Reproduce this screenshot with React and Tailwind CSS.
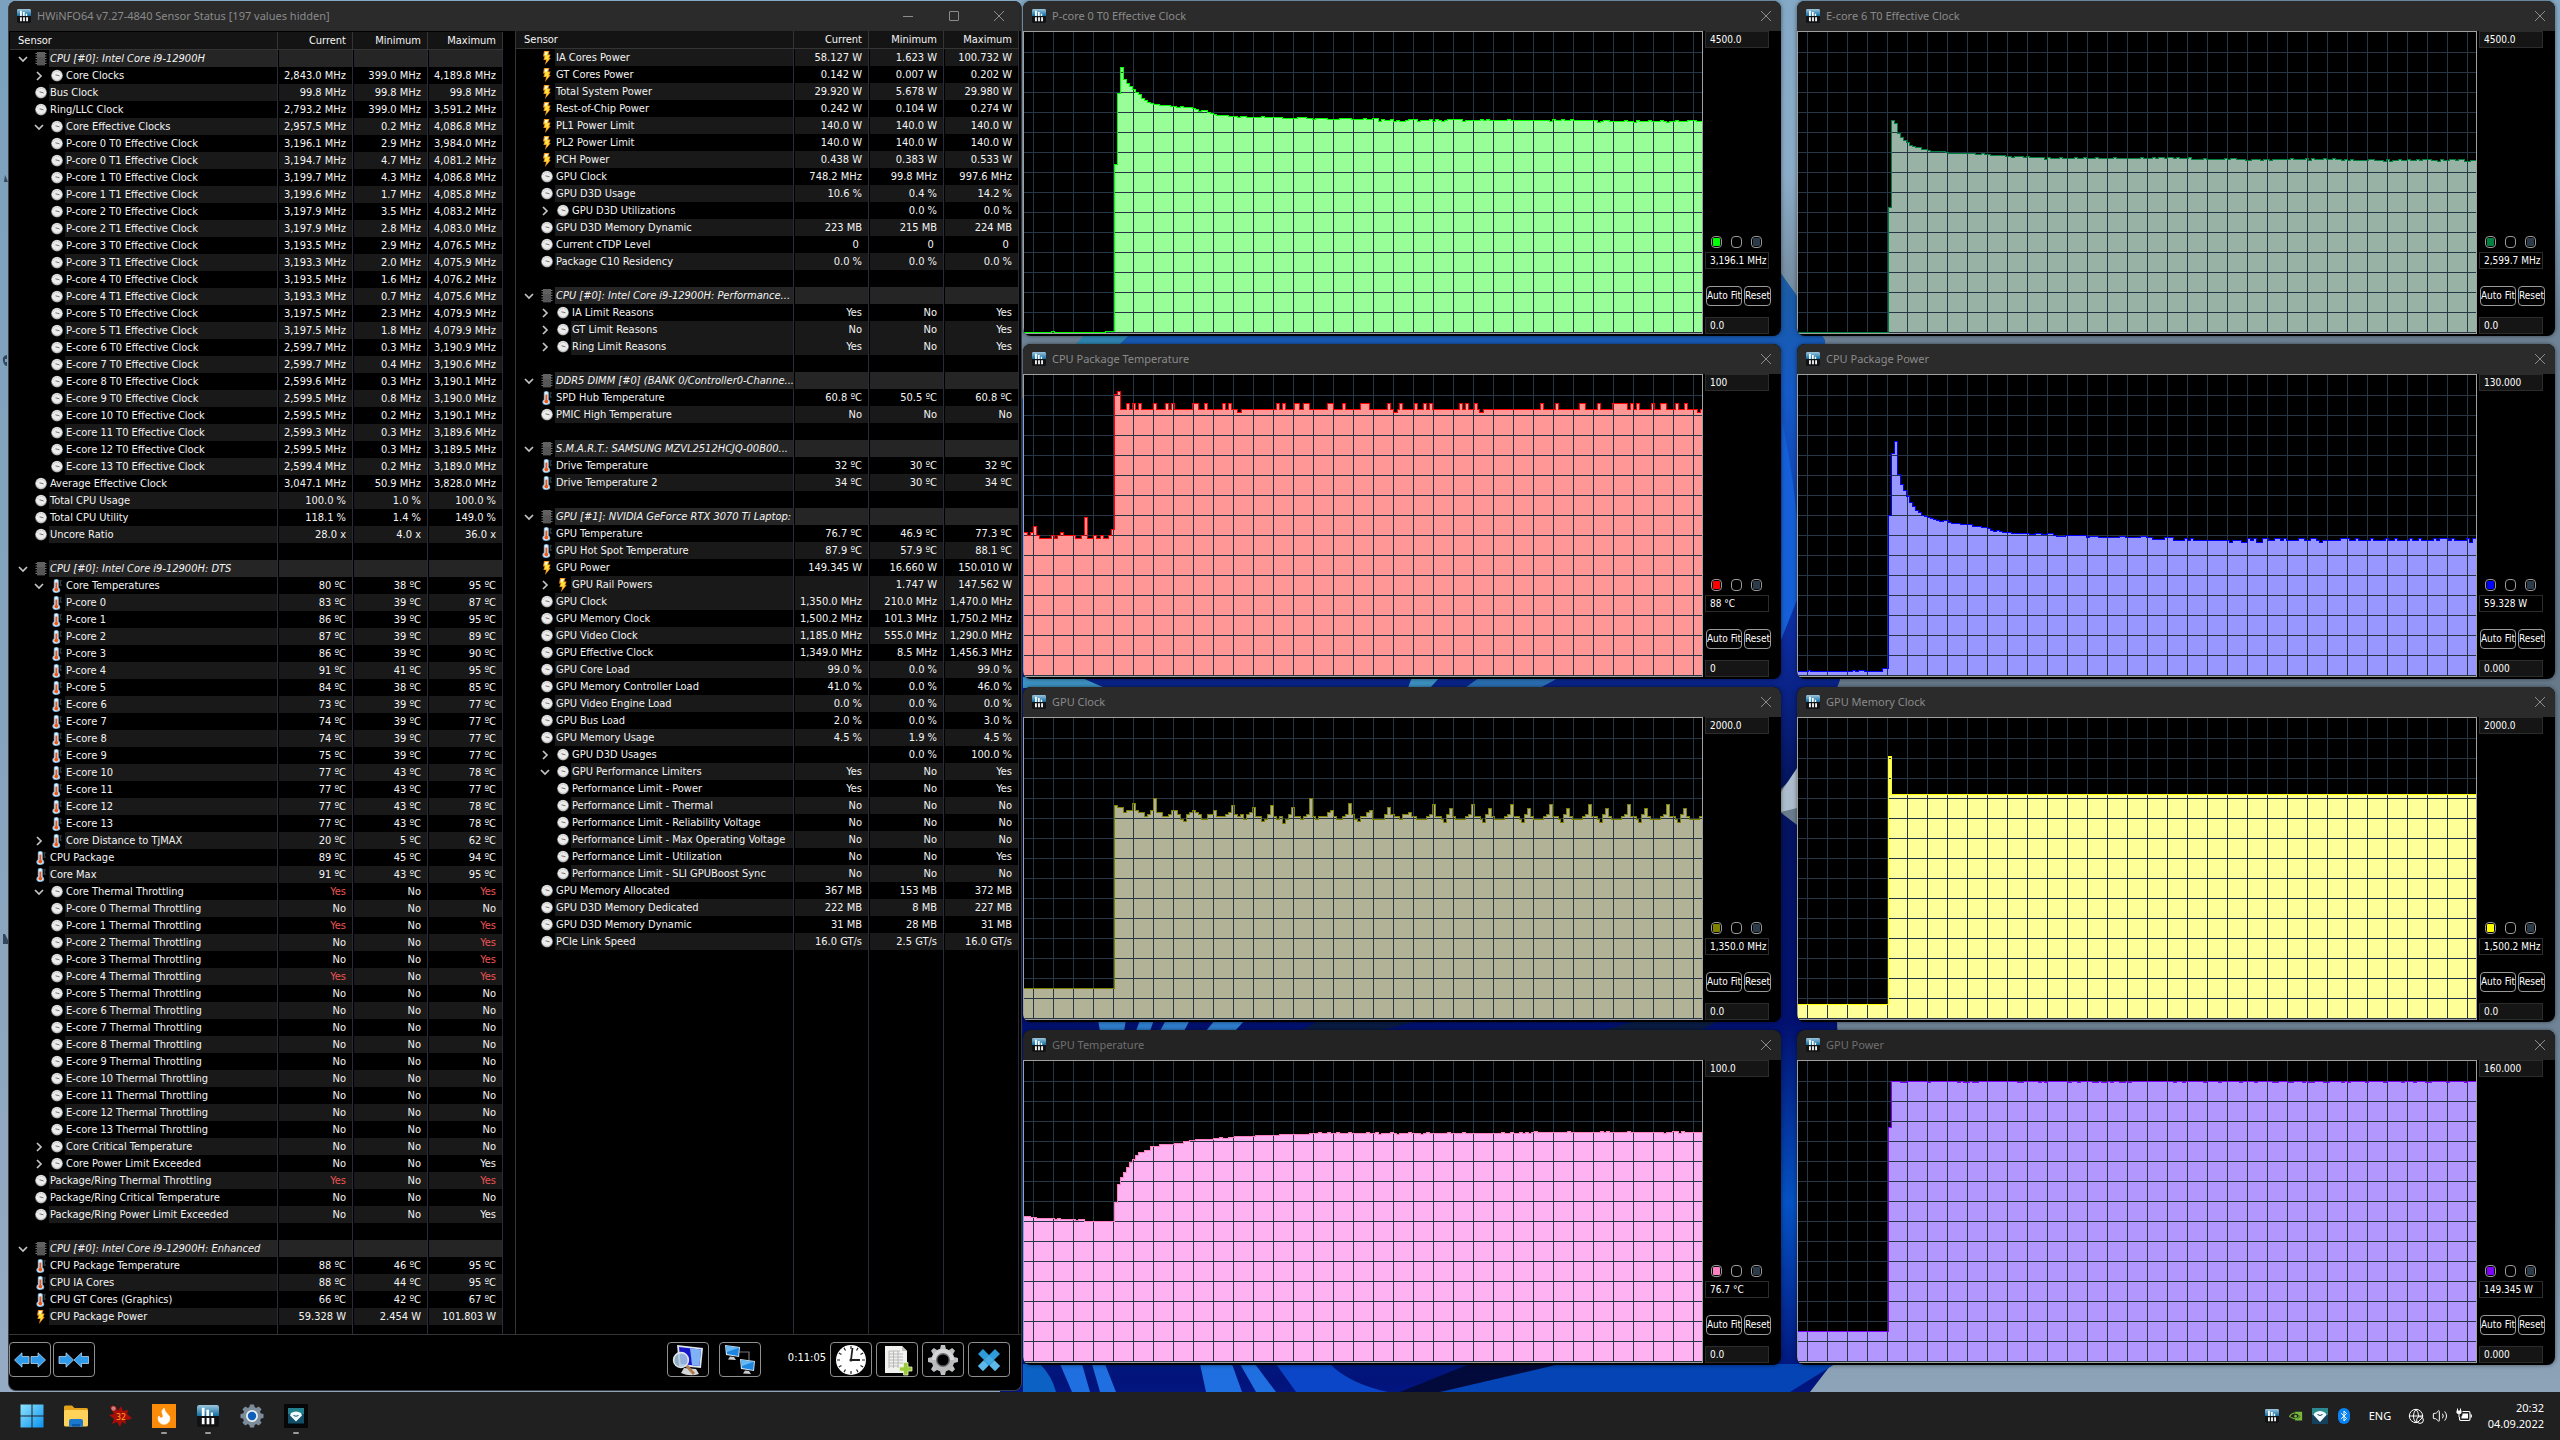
import React from "react";
import { Globe, Volume2, Bluetooth, Flame } from "lucide-react";

/* ---------- sensor data ---------- */
/* [kind, label, current, minimum, maximum]; kind: H header, B blank,
   c gauge, t thermometer, p power; a digit gives the nesting level and
   > or v an expander; = keeps the shade of the row above; ! marks alerts */
const LEFT = [
  ["H", "CPU [#0]: Intel Core i9-12900H"],
  ["c1>", "Core Clocks", "2,843.0 MHz", "399.0 MHz", "4,189.8 MHz"],
  ["c0", "Bus Clock", "99.8 MHz", "99.8 MHz", "99.8 MHz"],
  ["c0", "Ring/LLC Clock", "2,793.2 MHz", "399.0 MHz", "3,591.2 MHz"],
  ["c1v", "Core Effective Clocks", "2,957.5 MHz", "0.2 MHz", "4,086.8 MHz"],
  ["c1", "P-core 0 T0 Effective Clock", "3,196.1 MHz", "2.9 MHz", "3,984.0 MHz"],
  ["c1", "P-core 0 T1 Effective Clock", "3,194.7 MHz", "4.7 MHz", "4,081.2 MHz"],
  ["c1", "P-core 1 T0 Effective Clock", "3,199.7 MHz", "4.3 MHz", "4,086.8 MHz"],
  ["c1", "P-core 1 T1 Effective Clock", "3,199.6 MHz", "1.7 MHz", "4,085.8 MHz"],
  ["c1", "P-core 2 T0 Effective Clock", "3,197.9 MHz", "3.5 MHz", "4,083.2 MHz"],
  ["c1", "P-core 2 T1 Effective Clock", "3,197.9 MHz", "2.8 MHz", "4,083.0 MHz"],
  ["c1", "P-core 3 T0 Effective Clock", "3,193.5 MHz", "2.9 MHz", "4,076.5 MHz"],
  ["c1", "P-core 3 T1 Effective Clock", "3,193.3 MHz", "2.0 MHz", "4,075.9 MHz"],
  ["c1", "P-core 4 T0 Effective Clock", "3,193.5 MHz", "1.6 MHz", "4,076.2 MHz"],
  ["c1", "P-core 4 T1 Effective Clock", "3,193.3 MHz", "0.7 MHz", "4,075.6 MHz"],
  ["c1", "P-core 5 T0 Effective Clock", "3,197.5 MHz", "2.3 MHz", "4,079.9 MHz"],
  ["c1", "P-core 5 T1 Effective Clock", "3,197.5 MHz", "1.8 MHz", "4,079.9 MHz"],
  ["c1", "E-core 6 T0 Effective Clock", "2,599.7 MHz", "0.3 MHz", "3,190.9 MHz"],
  ["c1", "E-core 7 T0 Effective Clock", "2,599.7 MHz", "0.4 MHz", "3,190.6 MHz"],
  ["c1", "E-core 8 T0 Effective Clock", "2,599.6 MHz", "0.3 MHz", "3,190.1 MHz"],
  ["c1", "E-core 9 T0 Effective Clock", "2,599.5 MHz", "0.8 MHz", "3,190.0 MHz"],
  ["c1", "E-core 10 T0 Effective Clock", "2,599.5 MHz", "0.2 MHz", "3,190.1 MHz"],
  ["c1", "E-core 11 T0 Effective Clock", "2,599.3 MHz", "0.3 MHz", "3,189.6 MHz"],
  ["c1", "E-core 12 T0 Effective Clock", "2,599.5 MHz", "0.3 MHz", "3,189.5 MHz"],
  ["c1", "E-core 13 T0 Effective Clock", "2,599.4 MHz", "0.2 MHz", "3,189.0 MHz"],
  ["c0", "Average Effective Clock", "3,047.1 MHz", "50.9 MHz", "3,828.0 MHz"],
  ["c0", "Total CPU Usage", "100.0 %", "1.0 %", "100.0 %"],
  ["c0", "Total CPU Utility", "118.1 %", "1.4 %", "149.0 %"],
  ["c0", "Uncore Ratio", "28.0 x", "4.0 x", "36.0 x"],
  ["B"],
  ["H", "CPU [#0]: Intel Core i9-12900H: DTS"],
  ["t1v", "Core Temperatures", "80 ºC", "38 ºC", "95 ºC"],
  ["t1", "P-core 0", "83 ºC", "39 ºC", "87 ºC"],
  ["t1", "P-core 1", "86 ºC", "39 ºC", "95 ºC"],
  ["t1", "P-core 2", "87 ºC", "39 ºC", "89 ºC"],
  ["t1", "P-core 3", "86 ºC", "39 ºC", "90 ºC"],
  ["t1", "P-core 4", "91 ºC", "41 ºC", "95 ºC"],
  ["t1", "P-core 5", "84 ºC", "38 ºC", "85 ºC"],
  ["t1", "E-core 6", "73 ºC", "39 ºC", "77 ºC"],
  ["t1", "E-core 7", "74 ºC", "39 ºC", "77 ºC"],
  ["t1", "E-core 8", "74 ºC", "39 ºC", "77 ºC"],
  ["t1", "E-core 9", "75 ºC", "39 ºC", "77 ºC"],
  ["t1", "E-core 10", "77 ºC", "43 ºC", "78 ºC"],
  ["t1", "E-core 11", "77 ºC", "43 ºC", "77 ºC"],
  ["t1", "E-core 12", "77 ºC", "43 ºC", "78 ºC"],
  ["t1", "E-core 13", "77 ºC", "43 ºC", "78 ºC"],
  ["t1>", "Core Distance to TjMAX", "20 ºC", "5 ºC", "62 ºC"],
  ["t0", "CPU Package", "89 ºC", "45 ºC", "94 ºC"],
  ["t0", "Core Max", "91 ºC", "43 ºC", "95 ºC"],
  ["c1v", "Core Thermal Throttling", "!Yes", "No", "!Yes"],
  ["c1", "P-core 0 Thermal Throttling", "No", "No", "No"],
  ["c1", "P-core 1 Thermal Throttling", "!Yes", "No", "!Yes"],
  ["c1", "P-core 2 Thermal Throttling", "No", "No", "!Yes"],
  ["c1", "P-core 3 Thermal Throttling", "No", "No", "!Yes"],
  ["c1", "P-core 4 Thermal Throttling", "!Yes", "No", "!Yes"],
  ["c1", "P-core 5 Thermal Throttling", "No", "No", "No"],
  ["c1", "E-core 6 Thermal Throttling", "No", "No", "No"],
  ["c1", "E-core 7 Thermal Throttling", "No", "No", "No"],
  ["c1", "E-core 8 Thermal Throttling", "No", "No", "No"],
  ["c1", "E-core 9 Thermal Throttling", "No", "No", "No"],
  ["c1", "E-core 10 Thermal Throttling", "No", "No", "No"],
  ["c1", "E-core 11 Thermal Throttling", "No", "No", "No"],
  ["c1", "E-core 12 Thermal Throttling", "No", "No", "No"],
  ["c1", "E-core 13 Thermal Throttling", "No", "No", "No"],
  ["c1>", "Core Critical Temperature", "No", "No", "No"],
  ["c1>", "Core Power Limit Exceeded", "No", "No", "Yes"],
  ["c0", "Package/Ring Thermal Throttling", "!Yes", "No", "!Yes"],
  ["c0", "Package/Ring Critical Temperature", "No", "No", "No"],
  ["c0", "Package/Ring Power Limit Exceeded", "No", "No", "Yes"],
  ["B"],
  ["H", "CPU [#0]: Intel Core i9-12900H: Enhanced"],
  ["t0", "CPU Package Temperature", "88 ºC", "46 ºC", "95 ºC"],
  ["t0", "CPU IA Cores", "88 ºC", "44 ºC", "95 ºC"],
  ["t0", "CPU GT Cores (Graphics)", "66 ºC", "42 ºC", "67 ºC"],
  ["p0", "CPU Package Power", "59.328 W", "2.454 W", "101.803 W"],
];

const RIGHT = [
  ["p0", "IA Cores Power", "58.127 W", "1.623 W", "100.732 W"],
  ["p0", "GT Cores Power", "0.142 W", "0.007 W", "0.202 W"],
  ["p0", "Total System Power", "29.920 W", "5.678 W", "29.980 W"],
  ["p0", "Rest-of-Chip Power", "0.242 W", "0.104 W", "0.274 W"],
  ["p0", "PL1 Power Limit", "140.0 W", "140.0 W", "140.0 W"],
  ["p0", "PL2 Power Limit", "140.0 W", "140.0 W", "140.0 W"],
  ["p0", "PCH Power", "0.438 W", "0.383 W", "0.533 W"],
  ["c0", "GPU Clock", "748.2 MHz", "99.8 MHz", "997.6 MHz"],
  ["c0", "GPU D3D Usage", "10.6 %", "0.4 %", "14.2 %"],
  ["c1>", "GPU D3D Utilizations", "", "0.0 %", "0.0 %"],
  ["c0", "GPU D3D Memory Dynamic", "223 MB", "215 MB", "224 MB"],
  ["c0", "Current cTDP Level", "0\u00a0", "0\u00a0", "0\u00a0"],
  ["c0", "Package C10 Residency", "0.0 %", "0.0 %", "0.0 %"],
  ["B"],
  ["H", "CPU [#0]: Intel Core i9-12900H: Performance..."],
  ["c1>", "IA Limit Reasons", "Yes", "No", "Yes"],
  ["c1>", "GT Limit Reasons", "No", "No", "Yes"],
  ["c1>=", "Ring Limit Reasons", "Yes", "No", "Yes"],
  ["B"],
  ["H", "DDR5 DIMM [#0] (BANK 0/Controller0-Channe..."],
  ["t0", "SPD Hub Temperature", "60.8 ºC", "50.5 ºC", "60.8 ºC"],
  ["c0", "PMIC High Temperature", "No", "No", "No"],
  ["B"],
  ["H", "S.M.A.R.T.: SAMSUNG MZVL2512HCJQ-00B00..."],
  ["t0", "Drive Temperature", "32 ºC", "30 ºC", "32 ºC"],
  ["t0", "Drive Temperature 2", "34 ºC", "30 ºC", "34 ºC"],
  ["B"],
  ["H", "GPU [#1]: NVIDIA GeForce RTX 3070 Ti Laptop:"],
  ["t0", "GPU Temperature", "76.7 ºC", "46.9 ºC", "77.3 ºC"],
  ["t0", "GPU Hot Spot Temperature", "87.9 ºC", "57.9 ºC", "88.1 ºC"],
  ["p0", "GPU Power", "149.345 W", "16.660 W", "150.010 W"],
  ["p1>", "GPU Rail Powers", "", "1.747 W", "147.562 W"],
  ["c0=", "GPU Clock", "1,350.0 MHz", "210.0 MHz", "1,470.0 MHz"],
  ["c0", "GPU Memory Clock", "1,500.2 MHz", "101.3 MHz", "1,750.2 MHz"],
  ["c0", "GPU Video Clock", "1,185.0 MHz", "555.0 MHz", "1,290.0 MHz"],
  ["c0", "GPU Effective Clock", "1,349.0 MHz", "8.5 MHz", "1,456.3 MHz"],
  ["c0", "GPU Core Load", "99.0 %", "0.0 %", "99.0 %"],
  ["c0", "GPU Memory Controller Load", "41.0 %", "0.0 %", "46.0 %"],
  ["c0", "GPU Video Engine Load", "0.0 %", "0.0 %", "0.0 %"],
  ["c0", "GPU Bus Load", "2.0 %", "0.0 %", "3.0 %"],
  ["c0", "GPU Memory Usage", "4.5 %", "1.9 %", "4.5 %"],
  ["c1>", "GPU D3D Usages", "", "0.0 %", "100.0 %"],
  ["c1v", "GPU Performance Limiters", "Yes", "No", "Yes"],
  ["c1", "Performance Limit - Power", "Yes", "No", "Yes"],
  ["c1", "Performance Limit - Thermal", "No", "No", "No"],
  ["c1", "Performance Limit - Reliability Voltage", "No", "No", "No"],
  ["c1", "Performance Limit - Max Operating Voltage", "No", "No", "No"],
  ["c1", "Performance Limit - Utilization", "No", "No", "Yes"],
  ["c1", "Performance Limit - SLI GPUBoost Sync", "No", "No", "No"],
  ["c0", "GPU Memory Allocated", "367 MB", "153 MB", "372 MB"],
  ["c0", "GPU D3D Memory Dedicated", "222 MB", "8 MB", "227 MB"],
  ["c0", "GPU D3D Memory Dynamic", "31 MB", "28 MB", "31 MB"],
  ["c0", "PCIe Link Speed", "16.0 GT/s", "2.5 GT/s", "16.0 GT/s"],
];

/* ---------- small icons ---------- */
const GaugeIcon = () => (
  <svg className="size-3.5 shrink-0" viewBox="0 0 14 14" aria-hidden="true">
    <circle cx="7" cy="6.6" r="5.9" fill="#8a8a8a" />
    <circle cx="7" cy="6.2" r="5.2" fill="#ececec" />
    <path d="M2.800 5A4.600 4.600 0 0 1 11.200 5" fill="none" stroke="#a9a9a9" strokeWidth=".9" strokeDasharray="1 1" />
    <path d="M5.500 5.800L9.500 6.800" stroke="#6b6460" strokeWidth=".9" />
    <path d="M3.200 9.600a4.800 4.800 0 0 0 7.600 0" stroke="#c4c4c4" strokeWidth="1" fill="none" />
  </svg>
);
const ThermoIcon = () => (
  <svg className="size-3.5 shrink-0" viewBox="0 0 14 14" aria-hidden="true">
    <path d="M3.800 1.500Q3.800 0 6.300 0T8.800 1.500V8.400Q10.600 9.800 10.200 11.800T6.300 14 2.400 11.800 3.800 8.400Z" fill="#79b4dd" />
    <path d="M4.800 1.600Q4.800 .8 6.300 .8T7.800 1.600V8.800Q9.400 10 9.200 11.400T6.300 13 3.400 11.400 4.800 8.800Z" fill="#e3eff8" />
    <path d="M5.400 3.600h1.900v6H5.400z" fill="#e9571a" />
    <ellipse cx="6.300" cy="10.600" rx="2" ry="1.800" fill="#e9571a" />
    <path d="M9.600 2h2M9.600 4h1.400M9.600 6h2" stroke="#7d8c98" strokeWidth=".8" />
  </svg>
);
const BoltIcon = () => (
  <svg className="size-3.5 shrink-0" viewBox="0 0 14 14" aria-hidden="true">
    <path d="M4 0H9.400L8.400 3.400H10.600L9.400 7H10.800L5 14 6 9H3.400L4.400 5.600H3Z" fill="#ee8a1c" />
    <path d="M5 .8H8.200L7.200 4.200H9.500L8.300 7.800H9.200L6.200 11.600 7 8.200H4.500L5.500 4.800H4.200Z" fill="#ffe23c" />
    <path d="M5.200 1h2.600L6.700 3.800H4.500Z" fill="#fffbe0" />
  </svg>
);
const ChipIcon = () => (
  <svg className="size-3.5 shrink-0" viewBox="0 0 14 14" aria-hidden="true">
    <path d="M1.500 1.500h11M1.500 4h11M1.500 6.500h11M1.500 9h11M1.500 11.500h11" stroke="#777" strokeWidth="1" />
    <rect x="3" y="0" width="8" height="13.400" fill="#565656" />
    <rect x="3" y="0" width="8" height="5" fill="#606060" />
  </svg>
);
const ICONS = { c: GaugeIcon, t: ThermoIcon, p: BoltIcon, H: ChipIcon };

const Expander = ({ open, label }) => (
  <button type="button" aria-label={(open ? "Collapse " : "Expand ") + label} className="flex size-2.5 shrink-0 items-center justify-center">
    <svg className="size-2.5" viewBox="0 0 10 10" fill="none" stroke="#c4c4c4" strokeWidth="1.700" aria-hidden="true">
      <path d={open ? "M1 3L5 7L9 3" : "M3 1L7 5L3 9"} />
    </svg>
  </button>
);

const HwIcon = ({ className }) => (
  <svg className={className} viewBox="0 0 16 16" aria-hidden="true">
    <defs>
      <linearGradient id="hwTop" x1="0" y1="0" x2="0" y2="1">
        <stop offset="0" stopColor="#9cc4dc" />
        <stop offset="1" stopColor="#0e6ea3" />
      </linearGradient>
    </defs>
    <rect width="16" height="16" rx="1.600" fill="#101214" />
    <path d="M0 8V1.600Q0 0 1.600 0H14.400Q16 0 16 1.600V8Z" fill="url(#hwTop)" />
    <path d="M3.500 2h2v6h-2zM6.800 3.400h2V8h-2zM10 5.400h1.600V8H10z" fill="#fff" />
    <path d="M3.500 9.500h2V14h-2zM7 9.500h2V14H7zM10.500 9.500h2V14h-2z" fill="#fff" />
  </svg>
);

/* ---------- sensor table ---------- */
const Name = ({ kind, label, shade }) => {
  const Icon = ICONS[kind[0]];
  const nested = kind[1] === "1";
  const expander = kind === "H" || kind.includes(">") || kind.includes("v");
  return (
    <div className="flex h-[17px] items-center">
      <span className={"flex shrink-0 items-center justify-between pr-px " + (nested ? "w-[55px] pl-6" : "w-[39px] pl-2")}>
        {expander ? <Expander open={kind === "H" || kind.includes("v")} label={label} /> : <span />}
        <Icon />
      </span>
      <span className={"h-full flex-1 pt-px pl-px whitespace-nowrap " + shade + (kind === "H" ? " italic" : "")}>{label}</span>
    </div>
  );
};

function SensorTable({ rows, firstShaded, caption }) {
  let shaded = !firstShaded;
  return (
    <table aria-label={caption} className="h-full w-full table-fixed border-separate border-spacing-0 font-['DejaVu_Sans_Condensed','DejaVu_Sans',sans-serif] text-[11px] leading-4 text-[#f4f4f4]">
      <colgroup>
        <col />
        <col className="w-[75px]" />
        <col className="w-[75px]" />
        <col className="w-[75px]" />
      </colgroup>
      <thead>
        <tr className="h-[18px] bg-[#141414]">
          <th className="h-[18px] border-r border-b border-[#343434] p-0 pt-px pl-2 text-left font-normal">Sensor</th>
          {["Current", "Minimum", "Maximum"].map((h) => (
            <th key={h} className="h-[18px] border-r border-b border-[#343434] p-0 pt-px pr-1.5 text-right font-normal">{h}</th>
          ))}
        </tr>
      </thead>
      <tbody>
        {rows.map(([kind, label, ...values], i) => {
          if (kind === "B") shaded = false;
          else if (kind === "H") shaded = true;
          else if (!kind.includes("=")) shaded = !shaded;
          const shade = kind === "H" ? "bg-[#252525]" : shaded ? "bg-[#191919]" : "bg-black";
          const cells = values.length ? values : ["", "", ""];
          return (
            <tr key={i} className="h-[17px]">
              <td className="h-[17px] border-r border-[#262c38] p-0">{kind !== "B" && <Name kind={kind} label={label} shade={shade} />}</td>
              {cells.map((v, k) => (
                <td key={k} className={"h-[17px] border-r border-l border-l-black border-r-[#262c38] p-0 pt-px pr-1.5 text-right " + shade + (v[0] === "!" ? " text-[#ee5555]" : "")}>
                  {v.replace("!", "")}
                </td>
              ))}
            </tr>
          );
        })}
        <tr aria-hidden="true">
          {[0, 1, 2, 3].map((k) => <td key={k} className="border-r border-[#262c38] p-0" />)}
        </tr>
      </tbody>
    </table>
  );
}

/* ---------- main window ---------- */
const WinX = () => (
  <svg className="size-2.5" viewBox="0 0 10 10" stroke="#8c8c8c" strokeWidth="1" aria-hidden="true">
    <path d="M0 0L10 10M10 0L0 10" />
  </svg>
);

const ToolButton = ({ label, children }) => (
  <button type="button" aria-label={label} className="flex h-[35px] w-[42px] shrink-0 items-center justify-center rounded border border-[#8f8f8f] bg-black">
    {children}
  </button>
);

const Arrow = ({ x, flip }) => (
  <path
    transform={"translate(" + x + " 0)" + (flip ? " scale(-1 1)" : "")}
    d="M0.5 4.5H7.5V.8L15 8L7.5 15.2V11.5H.5Z"
    fill="#2f9bea"
    stroke="#cfe9fb"
    strokeWidth=".7"
  />
);

const Monitor = ({ x, y }) => (
  <g transform={"translate(" + x + " " + y + ")"}>
    <path d="M0 0L15 2L14 12L1 10Z" fill="#d8e4ee" />
    <path d="M1 1L14 2.8L13.2 11L2 9Z" fill="#1c86e0" />
    <path d="M1 1L14 2.8L2 7Z" fill="#66b8f4" />
    <path d="M5 11.5L9 12L11 15L3 14.5Z" fill="#c9cdd0" />
  </g>
);

const teeth = [0, 45, 90, 135, 180, 225, 270, 315];

function MainWindow() {
  return (
    <section className="flex flex-col overflow-hidden rounded-lg border border-t-0 border-[#3b3f44] bg-black">
      <header className="flex h-[30px] shrink-0 items-center bg-[#2b2b2b] pl-2">
        <HwIcon className="size-3.5" />
        <h1 className="ml-1.5 flex-1 font-['Noto_Sans',sans-serif] text-[11px] text-[#8a8a8a]">HWiNFO64 v7.27-4840 Sensor Status [197 values hidden]</h1>
        <button type="button" aria-label="Minimize" className="flex h-full w-[46px] items-center justify-center">
          <span className="h-px w-2.5 bg-[#8c8c8c]" />
        </button>
        <button type="button" aria-label="Maximize" className="flex h-full w-[46px] items-center justify-center">
          <span className="size-2.5 rounded-[1px] border border-[#8c8c8c]" />
        </button>
        <button type="button" aria-label="Close" className="flex h-full w-11 items-center justify-center">
          <WinX />
        </button>
      </header>
      <div className="grid flex-1 grid-cols-2">
        <div className="pt-px pr-3 pl-px">
          <SensorTable rows={LEFT} caption="CPU sensors" />
        </div>
        <div className="border-l border-[#343434] pr-0.5">
          <SensorTable rows={RIGHT} firstShaded caption="Power and GPU sensors" />
        </div>
      </div>
      <footer className="flex h-14 shrink-0 items-start border-t border-[#343434] pt-[7px] pr-[11px]">
        <div className="flex flex-1 gap-0.5">
          <ToolButton label="Expand all">
            <svg className="h-4 w-8" viewBox="0 0 32 16" aria-hidden="true"><Arrow x={15.5} flip /><Arrow x={16.5} /></svg>
          </ToolButton>
          <ToolButton label="Collapse all">
            <svg className="h-4 w-8" viewBox="0 0 32 16" aria-hidden="true"><Arrow x={0.5} /><Arrow x={31} flip /></svg>
          </ToolButton>
        </div>
        <div className="flex gap-2.5">
          <ToolButton label="System summary">
            <svg className="size-8" viewBox="0 0 32 32" aria-hidden="true">
              <path d="M5 1L31 4L29 24L7 22Z" fill="#dfe5ea" />
              <path d="M7 3L29 5.5L27.4 22L8.6 20Z" fill="#1717c9" />
              <path d="M18 4.3L29 5.5L27.4 22L20 21Z" fill="#7fb2f5" />
              <path d="M12 24L24 25L27 30Q18 33 9 29Z" fill="#d4d6d8" />
              <path d="M14 21L22 30" stroke="#b07c4c" strokeWidth="3" />
              <circle cx="9" cy="16" r="7.4" fill="#a9c9e2" fillOpacity=".85" stroke="#dde6ee" strokeWidth="1.6" />
            </svg>
          </ToolButton>
          <ToolButton label="Remote monitoring">
            <svg className="size-8" viewBox="0 0 32 32" aria-hidden="true">
              <path d="M15 8H25V16" fill="none" stroke="#70757a" strokeWidth="1.2" />
              <Monitor x={1} y={1} />
              <Monitor x={16} y={15} />
            </svg>
          </ToolButton>
        </div>
        <output aria-label="Elapsed time" className="mt-2 w-[65px] text-right font-['DejaVu_Sans_Condensed',sans-serif] text-[11px] leading-4 text-white">0:11:05</output>
        <div className="ml-1 flex gap-1">
          <ToolButton label="Reset timer">
            <svg className="size-8" viewBox="0 0 32 32" aria-hidden="true">
              <circle cx="16" cy="16" r="15" fill="#fff" />
              {[0, 30, 60, 90, 120, 150, 180, 210, 240, 270, 300, 330].map((a) => (
                <path key={a} d="M16 2V5" stroke="#222" strokeWidth="1.2" transform={"rotate(" + a + " 16 16)"} />
              ))}
              <path d="M17.5 4L16 16H25" fill="none" stroke="#222" strokeWidth="1.8" />
              <circle cx="16" cy="16" r="1.6" fill="#222" />
            </svg>
          </ToolButton>
          <ToolButton label="Start logging">
            <svg className="size-8" viewBox="0 0 32 32" aria-hidden="true">
              <path d="M4 2H21L26 7V29H4Z" fill="#f1f1ef" />
              <path d="M21 2V7H26Z" fill="#c2c4c2" />
              <path d="M8 7H19M8 10H22M8 13H22M8 16H22M8 19H22M8 22H18M8 7V24M12.5 7V24M17 7V24" stroke="#b6b8b8" strokeWidth="1" fill="none" />
              <path d="M22.5 18.5H27V23H31V27H27V31H22.5V27H18.5V23H22.5Z" fill="#9dc93c" stroke="#e6f2c6" strokeWidth=".8" />
            </svg>
          </ToolButton>
          <ToolButton label="Settings">
            <svg className="size-8" viewBox="0 0 32 32" aria-hidden="true">
              {teeth.map((a) => (
                <path key={a} d="M12.8 6L14 1H18L19.2 6Z" fill="#bfc1c2" transform={"rotate(" + a + " 16 16)"} />
              ))}
              <circle cx="16" cy="16" r="11.5" fill="#b9bbbc" />
              <path d="M5 16A11 11 0 0 1 27 16Z" fill="#d6d7d8" />
              <circle cx="16" cy="16" r="7" fill="#6b6e70" />
              <circle cx="16" cy="16" r="5.6" fill="#000" />
            </svg>
          </ToolButton>
          <ToolButton label="Close sensors">
            <svg className="size-8" viewBox="0 0 32 32" aria-hidden="true">
              <path d="M7.5 7.5L24.5 24.5M24.5 7.5L7.5 24.5" stroke="#2f9bd8" strokeWidth="7" />
              <path d="M13 19L7.500 24.5M19 19L24.5 24.5" stroke="#5cb9ea" strokeWidth="7" />
              <path d="M16 11.500L20.500 16L16 20.500L11.500 16Z" fill="#45aae2" />
            </svg>
          </ToolButton>
        </div>
      </footer>
    </section>
  );
}

/* ---------- graphs ---------- */
const W = 678;
const H = 301;
const parse = (s) => s.split(" ").map((p) => p.split(":").map(Number));

/* appends small deterministic fluctuations between x0 and the right edge */
function ripple(x0, base, amp, seed) {
  const out = [];
  let s = seed;
  for (let x = x0; x < W; x += 3) {
    s = (s * 1103515245 + 12345) % 2147483648;
    const r = s / 2147483648;
    const b = typeof base === "function" ? base(x) : base;
    out.push([x, Math.round(b + (r > 0.72 ? -amp : r < 0.08 ? amp : 0))]);
  }
  return out;
}

const spikes = (list, base) => list.flatMap(([x, y, w = 3]) => [[x, y], [x + w, base]]);

const gpuTail = [];
for (let x = 392; x < W; x += 39) {
  [[0, 101], [10, 98], [13, 96], [16, 86], [19, 98], [25, 101], [27, 104], [30, 96], [33, 90], [36, 98]].forEach(([d, y]) => gpuTail.push([x + d, y]));
}

const DATA = {
  pcore: [
    ...parse("0:300 27:299 30:300 81:299 90:132 93:61 96:35 99:47 102:51 105:54 108:57 111:60 114:62 117:66 120:68 123:70 126:71 129:72 135:73 146:74 152:75 156:74 159:75 168:76 171:77 174:79 177:78 183:80 186:81 189:82 192:83 204:84 213:85 216:84 222:85 237:84 240:85 258:86 273:85 282:86 288:87 291:86 303:87 315:86 327:87"),
    ...ripple(330, (x) => 87.4 + (x - 330) / 220, 1, 7),
  ],
  ecore: [
    ...parse("0:300 90:175 93:88 96:91 99:101 102:105 105:108 108:110 111:113 114:114 117:115 123:117 129:118 132:119 147:120 150:121 177:122 183:121 186:122 192:123 207:124 213:125 216:124 225:125"),
    ...ripple(228, (x) => 125.4 + (x - 228) / 150, 1, 21),
  ],
  temp: [
    ...parse("0:157 3:160 6:157 9:151 12:160 15:163 27:160 30:163 33:160 36:157 39:160 51:163 57:160 60:142 63:163 69:160 72:163 76:160 79:163 84:160 87:154 90:19 93:16 96:34"),
    ...spikes([[102, 28], [108, 28], [114, 28], [129, 28], [141, 28], [147, 28], [168, 28, 6], [180, 28], [198, 28], [204, 28], [213, 37, 4], [252, 28], [258, 28], [270, 28, 5], [279, 28, 6], [303, 28, 6], [318, 28], [336, 28, 9], [363, 28], [369, 37, 4], [375, 28], [390, 28], [399, 28], [405, 28], [435, 28], [441, 28], [450, 28], [455, 37, 4], [516, 28], [531, 28], [555, 28, 6], [573, 28], [588, 28, 15], [606, 28], [612, 28], [627, 28], [636, 28, 6], [651, 28], [660, 28], [673, 37]], 34),
  ],
  cpuPower: [
    ...parse("0:296 10:295 12:296 54:295 57:296 60:295 66:296 84:293 90:140 93:78 96:66 99:99 102:109 105:115 108:121 111:127 114:131 117:135 120:137 123:140 126:141 129:142 132:143 135:144 138:145 141:146 145:145 150:147 153:148 162:149 174:151 183:152 189:153 192:155 195:156 198:155 201:156 204:157 213:158 231:159 237:158 243:159 249:158 255:160 258:161 267:160 288:162 291:161 300:162 321:161 327:162 342:161 348:162 354:164 366:162 375:165"),
    ...ripple(380, 165, 2, 5),
  ],
  gpuClock: [
    ...parse("0:270 90:87 93:89 99:94 102:92 108:85 111:92 114:94 120:98 123:96 126:92 129:80 132:94 138:98 144:96 147:92 153:96 156:101 159:103 162:96 165:94 168:92 171:94 174:96 177:101 183:96 189:92 192:98 201:96 204:94 207:87 210:96 213:98 216:96 219:101 222:96 225:94 228:89 231:98 237:103 240:101 243:96 246:87 249:98 252:101 255:98 258:105 261:101 264:96 267:89 270:98 276:101 279:98 282:96 285:80 288:98 291:101 294:98 303:94 306:92 309:98 312:101 318:98 321:96 324:85 327:96 330:101 333:103 336:98 342:94 345:92 348:101 360:96 363:89 366:96 370:98 375:101 378:96 384:94 387:98"),
    ...gpuTail,
  ],
  memClock: parse("0:286 90:38 93:76"),
  gpuTemp: [
    ...parse("0:155 6:156 12:157 30:158 33:157 36:158 51:159 54:158 60:160 90:141 93:123 96:116 99:111 102:106 105:101 108:98 111:94 114:91 120:89 126:85 135:83 150:82 159:80 165:79 171:78 189:77 195:76 198:77 204:76 210:75 228:75 231:74 252:74 255:73 280:73"),
    ...ripple(285, (x) => 72.4 - (x - 285) / 240, 1, 13),
  ],
  gpuPower: [...parse("0:270 90:66 93:20"), ...ripple(96, 20.4, 1, 3).map(([x, y]) => [x, y < 20 ? 21 : 20])],
};

const GRID_X = Array.from({ length: 34 }, (_, i) => 9 + i * 20);
const GRID_Y = Array.from({ length: 15 }, (_, i) => 20 + i * 20);

function Plot({ points, line, fill, label }) {
  const trace = points.map(([x, y], i) => (i ? "H" + (x + 0.5) + "V" + (y + 0.5) : "M0 " + (y + 0.5))).join("") + "H" + W;
  const area = points.map(([x, y], i) => (i ? "H" + x + "V" + y : "M0 " + y)).join("") + "H" + W + "V" + H + "H0Z";
  return (
    <svg role="img" aria-label={label} className="block h-full w-full" viewBox={"0 0 " + W + " " + H} preserveAspectRatio="none" shapeRendering="crispEdges">
      <path d={area} fill={fill} />
      <path
        d={GRID_X.map((x) => "M" + (x + 0.5) + " 0V" + H).join("") + GRID_Y.map((y) => "M0 " + (y + 0.5) + "H" + W).join("")}
        stroke="#263645"
        fill="none"
      />
      <path d={trace} fill="none" stroke={line} strokeWidth="1" />
    </svg>
  );
}

const GRAPHS = [
  { title: "P-core 0 T0 Effective Clock", key: "pcore", max: "4500.0", min: "0.0", now: "3,196.1 MHz", line: "#00ff00", fill: "#98ff98" },
  { title: "E-core 6 T0 Effective Clock", key: "ecore", max: "4500.0", min: "0.0", now: "2,599.7 MHz", line: "#008040", fill: "#98b2a5" },
  { title: "CPU Package Temperature", key: "temp", max: "100", min: "0", now: "88 °C", line: "#ff0000", fill: "#ff9797" },
  { title: "CPU Package Power", key: "cpuPower", max: "130.000", min: "0.000", now: "59.328 W", line: "#0000ff", fill: "#9797ff" },
  { title: "GPU Clock", key: "gpuClock", max: "2000.0", min: "0.0", now: "1,350.0 MHz", line: "#808000", fill: "#b2b297" },
  { title: "GPU Memory Clock", key: "memClock", max: "2000.0", min: "0.0", now: "1,500.2 MHz", line: "#ffff00", fill: "#ffff97" },
  { title: "GPU Temperature", key: "gpuTemp", max: "100.0", min: "0.0", now: "76.7 °C", line: "#ff80c0", fill: "#ffb2f1", dim: true },
  { title: "GPU Power", key: "gpuPower", max: "160.000", min: "0.000", now: "149.345 W", line: "#8000ff", fill: "#b297ff", dim: true },
];

const Swatch = ({ color, label }) => (
  <button type="button" aria-label={label} className="flex h-3 w-[11px] rounded border border-[#9a9a9a] p-px">
    <span className="flex-1 rounded-[1px]" style={{ backgroundColor: color }} />
  </button>
);

const RangeField = ({ value, label }) => (
  <input aria-label={label} defaultValue={value} className="h-[17px] w-16 border border-[#2c2c2c] bg-[#151515] px-1 text-white outline-none" />
);

function GraphWindow({ g }) {
  return (
    <section className="flex flex-col overflow-hidden rounded-lg bg-black pb-0.5 shadow-[0_0_4px_rgba(0,0,0,0.5)]">
      <header className={"flex h-[30px] items-center pl-[9px] " + (g.dim ? "bg-[#232323] text-[#6f6f6f]" : "bg-[#2b2b2b] text-[#8a8a8a]")}>
        <HwIcon className="size-3.5" />
        <h2 className="ml-1.5 flex-1 font-['Noto_Sans',sans-serif] text-[11px]">{g.title}</h2>
        <button type="button" aria-label={"Close " + g.title} className="flex h-full w-[30px] items-center justify-center">
          <WinX />
        </button>
      </header>
      <div className="flex">
        <div className="h-[303px] flex-1 border border-[#a0a0a0]">
          <Plot points={DATA[g.key]} line={g.line} fill={g.fill} label={g.title} />
        </div>
        <div className="flex w-[78px] flex-col pl-0.5 font-['DejaVu_Sans_Condensed',sans-serif] text-[10px] leading-none text-white">
          <RangeField value={g.max} label={g.title + " maximum"} />
          <div className="mt-auto flex gap-[9px] pl-1.5">
            <Swatch color={g.line} label="Line color" />
            <Swatch color="#000000" label="Background color" />
            <Swatch color="#2b3a48" label="Grid color" />
          </div>
          <output aria-label={g.title + " value"} className="mt-1 flex h-[17px] w-16 items-center border border-[#2c2c2c] px-1 whitespace-nowrap">{g.now}</output>
          <div className="mt-[17px] flex gap-0.5 pl-px">
            <button type="button" className="flex h-5 w-9 items-center justify-center rounded border border-[#9a9a9a] whitespace-nowrap">Auto Fit</button>
            <button type="button" className="flex h-5 w-[27px] items-center justify-center rounded border border-[#9a9a9a]">Reset</button>
          </div>
          <div className="mt-[11px] flex">
            <RangeField value={g.min} label={g.title + " minimum"} />
          </div>
        </div>
      </div>
    </section>
  );
}

/* ---------- desktop ---------- */
function Wallpaper() {
  return (
    <svg className="absolute inset-0 h-full w-full" viewBox="0 0 2560 1440" preserveAspectRatio="none" aria-hidden="true">
      <defs>
        <linearGradient id="sky" x1="0" y1="0" x2="0" y2="1">
          <stop offset="0" stopColor="#84a9c6" />
          <stop offset=".12" stopColor="#8cadc9" />
          <stop offset=".22" stopColor="#6f8497" />
          <stop offset=".5" stopColor="#66798a" />
          <stop offset=".8" stopColor="#73899c" />
          <stop offset="1" stopColor="#93a9bf" />
        </linearGradient>
        <linearGradient id="edge" x1="0" y1="0" x2="0" y2="1">
          <stop offset="0" stopColor="#7ba1be" />
          <stop offset=".5" stopColor="#86a3bd" />
          <stop offset="1" stopColor="#97abc4" />
        </linearGradient>
        <linearGradient id="bloom" x1="0" y1="0" x2="0" y2="1">
          <stop offset="0" stopColor="#1c5c98" />
          <stop offset=".12" stopColor="#155ac8" />
          <stop offset=".33" stopColor="#0c2a9c" />
          <stop offset=".45" stopColor="#04145c" />
          <stop offset=".65" stopColor="#021170" />
          <stop offset=".8" stopColor="#0552c4" />
          <stop offset=".95" stopColor="#02137a" />
          <stop offset="1" stopColor="#04229a" />
        </linearGradient>
      </defs>
      <rect width="2560" height="1440" fill="url(#sky)" />
      <rect width="20" height="1440" fill="url(#edge)" />
      <path d="M5 175L8 182H4ZM7 355Q2 356 3 361T7 366V362H5V359H7ZM3 934H5L8 940V944H3Z" fill="#33475c" />
      <path d="M1000 420L1090 334L1500 250L1780 272L1800 300L1825 340L1840 680L1810 760L1780 790V812L1830 850L1850 1340L1810 1392L1000 1440Z" fill="url(#bloom)" />
      <path d="M1781 792L1797 768V808L1781 812Z" fill="#aebdcd" />
      <path d="M1023 677H1080L1105 688H1023ZM1412 677H1440L1430 688H1408Z" fill="#3d93c4" />
      <path d="M1480 677H1560L1540 688H1465Z" fill="#2a6fb4" />
      <path d="M1098 1020H1126L1124 1031H1100ZM1140 1020H1154L1150 1031H1136ZM1166 1020H1190L1184 1031H1160ZM1215 1020H1245L1235 1031H1206Z" fill="#2f7fd0" />
      <path d="M1320 1020H1420L1380 1031H1300ZM1640 1020H1720L1700 1031H1600Z" fill="#0a1c44" />
      <path d="M1023 1364H1040Q1052 1376 1056 1392H1023Z" fill="#0c62c4" />
      <path d="M1060 1364H1082L1090 1392H1072ZM1092 1364H1105L1116 1392H1100ZM1200 1364H1232L1242 1392H1206ZM1240 1364H1255L1276 1392H1256Z" fill="#1f6fe0" />
      <path d="M1276 1364H1330Q1350 1384 1388 1392H1296Z" fill="#0b46c8" />
      <path d="M1470 1364H1560L1480 1392H1400Z" fill="#020a3c" />
      <path d="M1560 1364H1835L1790 1392H1440Z" fill="#0444b4" />
      <path d="M1782 420Q1794 480 1797 520V600L1781 640Z" fill="#1560d8" />
      <path d="M1085 334H1130L1120 344H1076Z" fill="#2f88b4" />
    </svg>
  );
}

const TaskButton = ({ label, running, children }) => (
  <button type="button" aria-label={label} className="flex h-12 w-11 flex-col items-center pt-3">
    <span className="flex size-6 items-center justify-center">{children}</span>
    {running && <span className="mt-1 h-0.5 w-1.5 rounded-full bg-[#9a9a9a]" />}
  </button>
);

const GemIcon = ({ className }) => (
  <svg className={className} viewBox="0 0 24 24" aria-hidden="true">
    <rect width="24" height="24" fill="#050708" />
    <rect x="4" y="4" width="16" height="15.5" fill="#12506a" />
    <rect x="4" y="4" width="16" height="6" fill="#22808c" />
    <path d="M7 9Q12 6 17 9L18 11.5L12 17.5L6 11.5Z" fill="#effcfb" />
    <path d="M9.5 11.5Q12 13 14.5 11.5" stroke="#12506a" fill="none" />
  </svg>
);

function Taskbar() {
  return (
    <nav aria-label="Taskbar" className="relative flex h-12 shrink-0 items-center justify-between bg-[#202020] pr-4 pl-2.5 font-['Noto_Sans',sans-serif] text-[11px] text-white">
      <div className="flex">
        <TaskButton label="Start">
          <svg className="size-6" viewBox="0 0 24 24" aria-hidden="true">
            <defs>
              <linearGradient id="start" x1="0" y1="0" x2="1" y2="1">
                <stop offset="0" stopColor="#8fe3ff" />
                <stop offset="1" stopColor="#0a93f0" />
              </linearGradient>
            </defs>
            <path d="M.5 .5H11.5V11.5H.5ZM12.5 .5H23.5V11.5H12.5ZM.5 12.5H11.5V23.5H.5ZM12.5 12.5H23.5V23.5H12.5Z" fill="url(#start)" />
          </svg>
        </TaskButton>
        <TaskButton label="File Explorer">
          <svg className="size-6" viewBox="0 0 24 24" aria-hidden="true">
            <path d="M0 3Q0 1.5 1.5 1.5H8L10.5 4H22.5Q24 4 24 5.5V12H0Z" fill="#e2a21c" />
            <rect y="6" width="24" height="16.5" rx="1.5" fill="#ffd35a" />
            <path d="M5 22.5V17Q5 15 7 15H17Q19 15 19 17V22.5Z" fill="#1a79cf" />
            <path d="M8 20H16V22.5H8Z" fill="#0d5ba8" />
          </svg>
        </TaskButton>
        <TaskButton label="Super PI">
          <svg className="size-6" viewBox="0 0 24 24" aria-hidden="true">
            <path d="M2 3Q5 0 8 3L10 7L13 2L15 7L20 6L19 10L24 14L20 16L17 15L18 20L14 18L12 23L9 18L4 20L6 15L1 11L6 10Z" fill="#a80d08" />
            <circle cx="5.5" cy="4.5" r="2.2" fill="#c98080" />
            <text x="8" y="15.5" fontSize="8" fill="#ffa51f" fontFamily="DejaVu Sans, sans-serif">32</text>
          </svg>
        </TaskButton>
        <TaskButton label="FurMark" running>
          <span className="flex size-6 items-center justify-center bg-[#fb8c0a]">
            <Flame className="size-5" fill="#fff" color="#fff" strokeWidth={1} />
          </span>
        </TaskButton>
        <TaskButton label="HWiNFO64" running><HwIcon className="size-[22px]" /></TaskButton>
        <TaskButton label="Settings">
          <svg className="size-6" viewBox="0 0 24 24" aria-hidden="true">
            {teeth.map((a) => (
              <path key={a} d="M9.2 4L10 .5H14L14.8 4Z" fill="#7d8c9b" transform={"rotate(" + a + " 12 12)"} />
            ))}
            <circle cx="12" cy="12" r="9.2" fill="#7d8c9b" />
            <circle cx="12" cy="12" r="6" fill="#e9eef3" />
            <circle cx="12" cy="12" r="4.2" fill="#0e5fb8" />
          </svg>
        </TaskButton>
        <TaskButton label="System tool" running><GemIcon className="size-6" /></TaskButton>
      </div>
      <div className="flex items-center">
        <span className="flex w-6 justify-center"><HwIcon className="size-3.5" /></span>
        <span className="flex w-6 justify-center">
          <svg className="size-3.5" viewBox="0 0 16 16" aria-hidden="true">
            <path d="M7 3H15V13H7V11.5Q11 11.5 13 8.5Q11 4.5 7 4.5Z" fill="#76b93c" />
            <path d="M.5 8.5Q4 3.5 9 5Q11 6 12 8Q9 12 6 11Q2.5 10 .5 8.5Z" fill="none" stroke="#76b93c" strokeWidth="1.2" />
            <circle cx="7.5" cy="8.3" r="1.6" fill="#76b93c" />
          </svg>
        </span>
        <span className="flex w-6 justify-center">
          <svg className="size-4" viewBox="0 0 16 16" aria-hidden="true">
            <rect width="16" height="16" fill="#14405c" />
            <rect width="16" height="7" fill="#2b8a90" />
            <path d="M2.5 5Q8 1 13.5 5L14.500 7L8 14L1.500 7Z" fill="#f2fbfb" />
            <path d="M5.500 6.500Q8 8.500 10.500 6.500" stroke="#14405c" fill="none" />
          </svg>
        </span>
        <span className="flex w-6 justify-center">
          <span className="flex h-4 w-3 items-center justify-center rounded-full bg-[#0a84f5]"><Bluetooth className="size-3" strokeWidth={2} /></span>
        </span>
        <span className="w-12 text-center">ENG</span>
        <span className="flex w-6 justify-center">
          <span className="relative">
            <Globe className="size-4" strokeWidth={1.5} />
            <svg className="absolute right-0 bottom-0 size-2" viewBox="0 0 8 8" aria-hidden="true">
              <circle cx="4" cy="4" r="3.4" fill="#202020" stroke="#fff" />
              <path d="M1.600 6.400L6.400 1.600" stroke="#fff" />
            </svg>
          </span>
        </span>
        <span className="flex w-6 justify-center"><Volume2 className="size-4" strokeWidth={1.5} /></span>
        <span className="flex w-6 justify-center">
          <svg className="size-4" viewBox="0 0 16 16" fill="none" stroke="#fff" aria-hidden="true">
            <path d="M6.500 3.500H12.500Q14 3.500 14 5V11Q14 12.500 12.500 12.500H5Q3.500 12.500 3.500 11V9" strokeWidth="1.200" />
            <path d="M6.500 5.500H12V10.500H5.500V8.500L6.500 7Z" fill="#fff" stroke="none" />
            <path d="M15.300 6.500V9.500" strokeWidth="1.200" />
            <path d="M1.500 .5V3M4.500 .5V3M3 6V9" strokeWidth="1" />
            <path d="M.5 2.500H5.500V4.500Q5.500 6 3 6T.5 4.500Z" fill="#fff" stroke="none" />
          </svg>
        </span>
        <time className="w-[68px] text-right leading-4">
          <span className="block">20:32</span>
          <span className="block">04.09.2022</span>
        </time>
      </div>
    </nav>
  );
}

export default function App() {
  return (
    <div className="relative flex min-h-screen flex-col overflow-hidden bg-[#7b96ad]">
      <Wallpaper />
      <main className="relative grid flex-1 grid-cols-[1014fr_1532fr] gap-px pt-px pr-[5px] pb-px pl-2">
        <MainWindow />
        <div className="grid grid-cols-2 content-start gap-x-4 gap-y-2">
          {GRAPHS.map((g) => <GraphWindow key={g.title} g={g} />)}
        </div>
      </main>
      <Taskbar />
    </div>
  );
}
